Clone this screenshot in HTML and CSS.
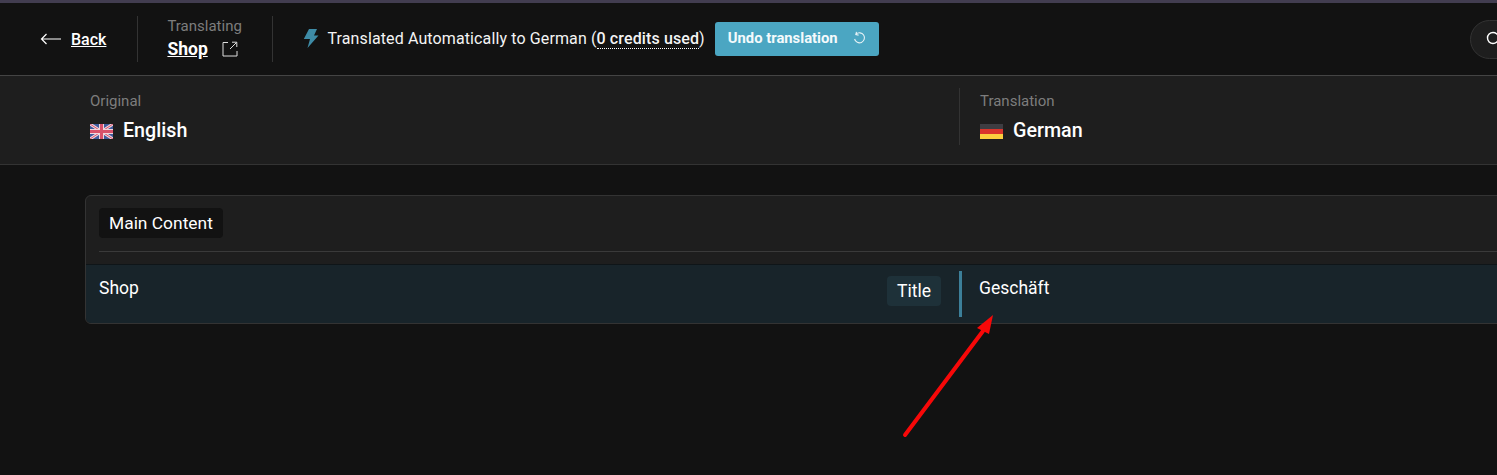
FILE: index.html
```html
<!DOCTYPE html>
<html lang="en">
<head>
    <meta charset="UTF-8">
    <meta name="viewport" content="width=device-width, initial-scale=1.0">
    <title>Translate</title>
    <link rel="stylesheet" href="styles.css">
</head>
<body>
    <header class="topbar">
        <a class="back" href="#">
            <svg class="back-icon" width="22" height="12" viewBox="0 0 22 12" fill="none" stroke="#fff" stroke-width="1.2"><path d="M21 6H1.5M6.5 1 1.5 6l5 5"/></svg>
            <span>Back</span>
        </a>
        <div class="divider"></div>
        <div class="page-info">
            <span class="label">Translating</span>
            <div class="page-name">
                <a href="#">Shop</a>
                <svg width="16" height="16" viewBox="0 0 16 16" fill="none" stroke="#ddd" stroke-width="1"><path d="M6 1.500H1v13.500h14V10M8 8l6.500-6.500M10 1.200h4.800V6"/></svg>
            </div>
        </div>
        <div class="divider"></div>
        <div class="status">
            <svg width="16" height="19" viewBox="0 0 16 19" fill="#3e8ba6"><path d="M6 0h8l-3 6.500h4.500L4.500 19l2.500-9H.8z"/></svg>
            <span>Translated Automatically to German <span class="credits">(<b>0 credits used</b>)</span></span>
        </div>
        <button class="undo">
            <span>Undo translation</span>
            <svg width="15" height="15" viewBox="0 0 15 15" fill="none" stroke="#e6f2f6" stroke-width="1.1"><path d="M4 3.200A5 5 0 1 1 2.600 8M4.500.8 3.800 3.500l2.800.6"/></svg>
        </button>
        <div class="search">
            <svg width="16" height="16" viewBox="0 0 16 16" fill="none" stroke="#fff" stroke-width="1.400"><circle cx="7" cy="7" r="5.500"/><path d="M11 11l4 4"/></svg>
        </div>
    </header>

    <section class="langbar">
        <div class="lang lang-original">
            <span class="label">Original</span>
            <div class="lang-name">
                <svg class="flag" width="23" height="15" viewBox="0 0 23 15">
                    <rect width="23" height="15" fill="#3f5a9c"/>
                    <path d="M0 0l23 15M23 0 0 15" stroke="#f0d5dc" stroke-width="3"/>
                    <path d="M0 0l23 15M23 0 0 15" stroke="#d8516b" stroke-width="1"/>
                    <path d="M11.500 0v15M0 7.500h23" stroke="#f0d5dc" stroke-width="5"/>
                    <path d="M11.500 0v15M0 7.500h23" stroke="#d8516b" stroke-width="3"/>
                </svg>
                <span>English</span>
            </div>
        </div>
        <div class="lang lang-translation">
            <span class="label">Translation</span>
            <div class="lang-name">
                <svg class="flag" width="23" height="15" viewBox="0 0 23 15">
                    <rect width="23" height="5" fill="#3d3d42"/>
                    <rect y="5" width="23" height="5" fill="#d9352c"/>
                    <rect y="10" width="23" height="5" fill="#fbcf3e"/>
                </svg>
                <span>German</span>
            </div>
        </div>
    </section>

    <main class="content">
        <div class="card">
            <div class="card-head">
                <div class="card-title-row">
                    <span class="section-tag">Main Content</span>
                </div>
            </div>
            <div class="row">
                <div class="cell cell-source">
                    <span>Shop</span>
                    <span class="field-tag">Title</span>
                </div>
                <div class="cell cell-target">Geschäft</div>
            </div>
        </div>
    </main>

    <svg class="arrow" width="100" height="130" viewBox="0 0 100 130" fill="#f80808">
        <path d="M5 123 83 19" stroke="#f80808" stroke-width="4" stroke-linecap="round"/>
        <path d="M93 3 89 22 77 16z"/>
    </svg>
</body>
</html>
```

FILE: styles.css
```css
html, body {
    height: 100%;
}
body {
    position: relative;
    font-family: Roboto, 'Liberation Sans', sans-serif;
    margin: 0;
    padding: 0;
    overflow: hidden;
    background: #121212;
    color: #fff;
    border-top: 3px solid #423d50;
    box-sizing: border-box;
}
a {
    color: #fff;
}
.topbar {
    height: 72px;
    display: flex;
    align-items: center;
    padding-left: 40px;
    border-bottom: 1px solid #444;
    overflow: hidden;
}
.back {
    display: flex;
    align-items: center;
    gap: 9px;
    font-size: 16px;
    font-weight: 500;
    margin-top: 1px;
}
.back-icon {
    margin-top: -2px;
}
.divider {
    width: 1px;
    height: 46px;
    background: #333;
    margin-left: 30px;
}
.back + .divider {
    margin-left: 31px;
}
.page-info {
    display: flex;
    flex-direction: column;
    gap: 3px;
    width: 75px;
    margin-left: 29px;
    margin-top: -1px;
}
.label {
    font-size: 15px;
    color: #7d7d7d;
    line-height: 18px;
}
.page-name {
    display: flex;
    align-items: center;
    gap: 14px;
    font-size: 17.500px;
    font-weight: 700;
    line-height: 22px;
}
.status {
    display: flex;
    align-items: center;
    gap: 8px;
    margin-left: 30px;
    margin-top: -2px;
    font-size: 16px;
    letter-spacing: 0.12px;
    color: #f4f4f4;
}
.credits b {
    font-weight: 500;
    border-bottom: 1px dotted #fff;
}
.undo {
    display: flex;
    align-items: center;
    gap: 14px;
    height: 34px;
    margin-left: 10px;
    padding: 0 12px 2px 13px;
    background: #4ba6c2;
    border: none;
    border-radius: 3px;
    color: #f4fafc;
    font-family: inherit;
    font-size: 14.800px;
    font-weight: 700;
}
.search {
    flex: none;
    display: flex;
    align-items: center;
    width: 60px;
    height: 39px;
    margin-left: auto;
    margin-right: -33px;
    padding-left: 15px;
    background: #1e1e1e;
    border: 1px solid #333;
    border-radius: 20px;
    box-sizing: border-box;
}
.langbar {
    height: 88px;
    display: flex;
    background: #1e1e1e;
    border-bottom: 1px solid #333;
}
.lang {
    display: flex;
    flex-direction: column;
    gap: 8px;
    height: 57px;
    margin-top: 12px;
    padding-top: 4px;
    box-sizing: border-box;
}
.lang-original {
    width: 869px;
    margin-left: 90px;
}
.lang-translation {
    flex: 1;
    padding-left: 20px;
    border-left: 1px solid #333;
}
.lang-name {
    display: flex;
    align-items: center;
    gap: 10px;
    font-size: 19.700px;
    font-weight: 500;
    line-height: 26px;
}
.content {
    padding: 30px 0 0 85px;
}
.card {
    width: 1500px;
    height: 129px;
    background: #1e1e1e;
    border: 1px solid #333;
    border-radius: 6px;
    box-sizing: border-box;
    overflow: hidden;
}
.card-head {
    height: 69px;
    padding: 12px 13px 0;
    box-sizing: border-box;
    border-bottom: 1px solid #0f1518;
}
.card-title-row {
    height: 43px;
    border-bottom: 1px solid #3a3a3a;
}
.section-tag {
    display: inline-block;
    padding: 0 10px;
    background: #121212;
    border-radius: 4px;
    font-size: 17.400px;
    line-height: 30px;
}
.row {
    display: flex;
    height: 58px;
    background: #18242a;
}
.cell {
    font-size: 17.500px;
    line-height: 24px;
    padding-top: 11px;
}
.cell-source {
    display: flex;
    justify-content: space-between;
    width: 855px;
    padding-left: 13px;
    box-sizing: border-box;
}
.field-tag {
    height: 30px;
    padding: 0 10px;
    background: #1e3139;
    border-radius: 4px;
    line-height: 30px;
    align-self: flex-start;
}
.cell-target {
    flex: 1;
    position: relative;
    margin-left: 18px;
    padding-left: 20px;
}
.cell-target::before {
    content: "";
    position: absolute;
    left: 0;
    top: 6px;
    width: 3px;
    height: 46px;
    background: #3c7f99;
}
.flag {
    flex: none;
}
.arrow {
    position: absolute;
    left: 900px;
    top: 309px;
}
```
